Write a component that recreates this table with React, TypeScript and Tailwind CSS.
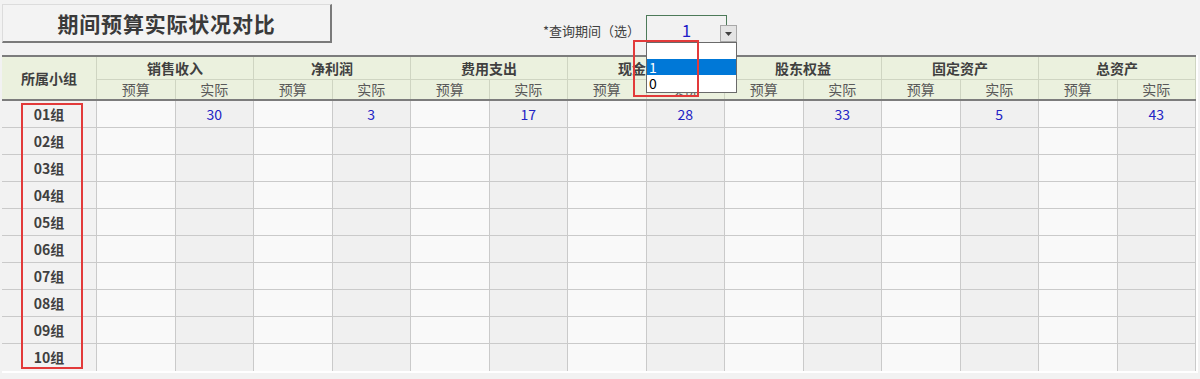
import React from "react";

const groups = ["销售收入", "净利润", "费用支出", "现金流量", "股东权益", "固定资产", "总资产"];
const actuals = [30, 3, 17, 28, 33, 5, 43];
const rows = ["01组", "02组", "03组", "04组", "05组", "06组", "07组", "08组", "09组", "10组"];

const font = { fontFamily: '"Noto Sans CJK SC", "Noto Sans", sans-serif' };

export default function App() {
  return (
    <div
      className="relative w-[1200px] h-[379px] overflow-hidden bg-[#f2f2f2] text-[#404040]"
      style={font}
    >
      {/* top bar */}
      <div className="flex items-start h-[55px] pl-[2px] pt-[4px]">
        <div className="w-[330px] h-[39px] flex items-center justify-center bg-[#f3f3f3] border-t border-l border-[#dcdcdc] border-r-2 border-b-2 border-r-[#7a7a7a] border-b-[#7a7a7a]">
          <span className="text-[21px] font-bold tracking-[0.8px] text-[#3a3a3a] leading-none">期间预算实际状况对比</span>
        </div>
        <div className="w-[308px] flex justify-end pt-[18px]">
          <span className="text-[13px] leading-[18px] text-[#404040]">*查询期间（选）</span>
        </div>
        <div className="ml-[6px] mt-[11px] w-[81px] h-[29px] border border-[#4d7a59] flex items-center justify-center">
          <span className="text-[17px] leading-none text-[#1f1fc8]">1</span>
        </div>
      </div>

      {/* table */}
      <div className="ml-[2px] w-[1196px] border-r-2 border-b-[2px] border-white">
        <div className="grid grid-cols-[95px_repeat(14,minmax(0,1fr))] border-t-2 border-[#7c7c7c] bg-[#ebf1de]">
          <div className="row-span-2 flex items-center justify-center text-[14px] font-bold text-[#404040] border-r border-[#cfd5c2]">
            所属小组
          </div>
          {groups.map((g) => (
            <div
              key={g}
              className="col-span-2 h-[23px] flex items-center justify-center text-[14px] font-bold text-[#404040] border-r border-b border-[#cfd5c2]"
            >
              {g}
            </div>
          ))}
          {groups.map((g) => (
            <React.Fragment key={g + "s"}>
              <div className="h-[19px] flex items-center justify-center text-[14px] text-[#595959] border-r border-[#cfd5c2]">
                预算
              </div>
              <div className="h-[19px] flex items-center justify-center text-[14px] text-[#595959] border-r border-[#cfd5c2]">
                实际
              </div>
            </React.Fragment>
          ))}
        </div>
        <div className="grid grid-cols-[95px_repeat(14,minmax(0,1fr))] border-t-2 border-[#7c7c7c]">
          {rows.map((r, ri) => (
            <React.Fragment key={r}>
              <div
                className={`h-[27px] flex items-center justify-center text-[14px] font-bold text-[#404040] bg-[#f2f2f2] border-r border-[#cacaca] ${
                  ri < rows.length - 1 ? "border-b" : ""
                }`}
              >
                {r}
              </div>
              {groups.map((g, gi) => (
                <React.Fragment key={g + r}>
                  <div
                    className={`h-[27px] bg-[#f9f9f9] border-r border-[#cacaca] ${
                      ri < rows.length - 1 ? "border-b" : ""
                    }`}
                  />
                  <div
                    className={`h-[27px] flex items-center justify-center text-[14px] text-[#2222c4] bg-[#f0f0f0] border-r border-[#cacaca] ${
                      ri < rows.length - 1 ? "border-b" : ""
                    }`}
                  >
                    {ri === 0 ? actuals[gi] : ""}
                  </div>
                </React.Fragment>
              ))}
            </React.Fragment>
          ))}
        </div>
      </div>

      {/* dropdown arrow button */}
      <div className="absolute left-[720px] top-[25px] w-[17px] h-[17px] bg-[#e4e4e4] border border-[#a8a8a8] flex items-center justify-center">
        <svg width="7" height="4" viewBox="0 0 7 4">
          <path d="M0 0 L7 0 L3.5 4 Z" fill="#404040" />
        </svg>
      </div>

      {/* dropdown list */}
      <div className="absolute left-[646px] top-[42px] w-[91px] h-[51px] bg-white border border-[#6a6a6a] text-[14px] text-black">
        <div className="h-[16px]" />
        <div className="h-[16px] bg-[#0078d7] text-white pl-[2px] leading-[16px]">1</div>
        <div className="h-[16px] pl-[2px] leading-[16px]">0</div>
      </div>

      {/* annotation boxes */}
      <div className="absolute left-[633px] top-[40px] w-[66px] h-[57px] border-2 border-[#e23a3a]" />
      <div className="absolute left-[21px] top-[103px] w-[62px] h-[266px] border-2 border-[#e23a3a]" />
    </div>
  );
}
